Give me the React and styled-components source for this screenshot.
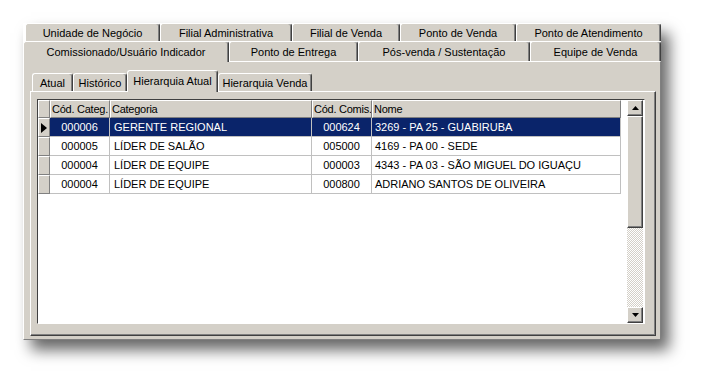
import React from 'react';
import styled, { createGlobalStyle } from 'styled-components';

const face = '#d4d0c8';
const shade = '#808080';
const dark = '#404040';

const GlobalStyle = createGlobalStyle`
  html, body {
    margin: 0;
    min-height: 100vh;
    background: #fff;
  }
  body {
    font-family: "Liberation Sans", Arial, sans-serif;
    font-size: 11px;
    color: #000;
  }
  #root {
    min-height: 100vh;
  }
`;

const Stage = styled.div`
  min-height: 100vh;
  box-sizing: border-box;
  padding: 23px 0 0 23px;
`;

const PageControl = styled.div`
  width: 638px;
  box-shadow: 8px 10px 14px rgba(0, 0, 0, 0.6);
`;

const TabRow = styled.div`
  display: flex;
  align-items: flex-end;
  height: ${p => p.$h}px;
  padding-left: ${p => p.$indent || 0}px;
  position: relative;
  z-index: 2;
`;

const Tab = styled.div`
  box-sizing: border-box;
  flex: none;
  width: ${p => p.$w}px;
  height: ${p => (p.$active ? p.$h + 1 : p.$h)}px;
  margin-bottom: ${p => (p.$active ? -1 : 0)}px;
  background: ${face};
  border-top: 1px solid #fff;
  border-left: 1px solid #fff;
  border-right: 1px solid ${dark};
  box-shadow: inset -1px 0 ${shade};
  border-radius: 3px 3px 0 0;
  display: flex;
  align-items: center;
  justify-content: center;
  padding-bottom: ${p => (p.$active ? 1 : 0)}px;
  white-space: nowrap;
`;

const OuterPanel = styled.div`
  box-sizing: border-box;
  position: relative;
  z-index: 1;
  height: 279px;
  background: ${face};
  border-top: 1px solid #fff;
  border-left: 1px solid #fff;
  border-right: 1px solid ${shade};
  border-bottom: 1px solid ${shade};
  padding: 8px 4px 3px 6px;
`;

const InnerPanel = styled.div`
  box-sizing: border-box;
  position: relative;
  z-index: 1;
  height: 245px;
  background: ${face};
  border-top: 1px solid #fff;
  border-left: 1px solid #fff;
  border-right: 1px solid ${dark};
  border-bottom: 1px solid ${dark};
  box-shadow: inset -1px -1px ${shade};
  padding: 7px 10px 0 6px;
`;

const Grid = styled.div`
  box-sizing: border-box;
  width: 608px;
  height: 225px;
  display: flex;
  background: #fff;
  border-top: 1px solid ${dark};
  border-left: 1px solid ${dark};
  border-right: 1px solid #fff;
  border-bottom: 1px solid #fff;
`;

const Table = styled.div`
  flex: 1;
  align-self: flex-start;
  display: grid;
  grid-template-columns: 12px 60px 202px 60px 249px;
  grid-auto-rows: 19px;
  grid-template-rows: 18px;
`;

const HeadCell = styled.div`
  box-sizing: border-box;
  background: ${face};
  border-top: 1px solid #fff;
  border-left: 1px solid #fff;
  border-right: 1px solid ${shade};
  border-bottom: 1px solid ${shade};
  display: flex;
  align-items: center;
  padding-left: 1px;
  letter-spacing: -0.25px;
  white-space: nowrap;
  overflow: hidden;
`;

const Indicator = styled.div`
  box-sizing: border-box;
  background: ${face};
  border-top: 1px solid #fff;
  border-left: 1px solid #fff;
  border-right: 1px solid ${shade};
  border-bottom: 1px solid ${shade};
  display: flex;
  align-items: center;
  justify-content: center;
`;

const Cell = styled.div`
  box-sizing: border-box;
  background: ${p => (p.$selected ? '#0a246a' : '#fff')};
  color: ${p => (p.$selected ? '#fff' : '#000')};
  border-right: 1px solid #c0c0c0;
  border-bottom: 1px solid #c0c0c0;
  display: flex;
  align-items: center;
  justify-content: ${p => (p.$center ? 'center' : 'flex-start')};
  padding-left: ${p => (p.$center ? 0 : p.$pad)}px;
  white-space: nowrap;
  overflow: hidden;
`;

const Scroll = styled.div`
  width: 16px;
  margin-right: 1px;
  display: flex;
  flex-direction: column;
`;

const ScrollButton = styled.div`
  box-sizing: border-box;
  height: ${p => p.$h}px;
  flex: none;
  background: ${face};
  border-top: 1px solid #fff;
  border-left: 1px solid #fff;
  border-right: 1px solid ${dark};
  border-bottom: 1px solid ${dark};
  box-shadow: inset -1px -1px ${shade};
  display: flex;
  align-items: center;
  justify-content: center;
`;

const Track = styled.div`
  flex: 1;
  background: repeating-conic-gradient(#fff 0 25%, ${face} 0 50%) 0 0 / 2px 2px;
`;

const Arrow = ({ down }) => (
  <svg width="7" height="4" viewBox="0 0 7 4">
    <polygon points={down ? '0,0 7,0 3.5,4' : '0,4 7,4 3.5,0'} fill="#000" />
  </svg>
);

const Pointer = () => (
  <svg width="6" height="10" viewBox="0 0 6 10">
    <polygon points="0,0 6,5 0,10" fill="#000" />
  </svg>
);

const backRow = [
  ['Unidade de Negócio', 135],
  ['Filial Administrativa', 132],
  ['Filial de Venda', 108],
  ['Ponto de Venda', 116],
  ['Ponto de Atendimento', 145],
];

const frontRow = [
  ['Comissionado/Usuário Indicador', 206, true],
  ['Ponto de Entrega', 129],
  ['Pós-venda / Sustentação', 172],
  ['Equipe de Venda', 131],
];

const innerTabs = [
  ['Atual', 41],
  ['Histórico', 54],
  ['Hierarquia Atual', 91, true],
  ['Hierarquia Venda', 94],
];

const columns = ['Cód. Categ.', 'Categoria', 'Cód. Comis.', 'Nome'];

const rows = [
  ['000006', 'GERENTE REGIONAL', '000624', '3269 - PA 25 - GUABIRUBA'],
  ['000005', 'LÍDER DE SALÃO', '005000', '4169 - PA 00 - SEDE'],
  ['000004', 'LÍDER DE EQUIPE', '000003', '4343 - PA 03 - SÃO MIGUEL DO IGUAÇU'],
  ['000004', 'LÍDER DE EQUIPE', '000800', 'ADRIANO SANTOS DE OLIVEIRA'],
];

export default function App() {
  return (
    <Stage>
      <GlobalStyle />
      <PageControl>
        <TabRow $h={18} $indent={2}>
          {backRow.map(([label, w]) => (
            <Tab key={label} $w={w} $h={18}>{label}</Tab>
          ))}
        </TabRow>
        <TabRow $h={20}>
          {frontRow.map(([label, w, active]) => (
            <Tab key={label} $w={w} $h={20} $active={active}>{label}</Tab>
          ))}
        </TabRow>
        <OuterPanel>
          <TabRow $h={21} $indent={2}>
            {innerTabs.map(([label, w, active]) => (
              <Tab key={label} $w={w} $h={active ? 21 : 18} $active={active}>{label}</Tab>
            ))}
          </TabRow>
          <InnerPanel>
            <Grid>
              <Table>
                <HeadCell />
                {columns.map(c => (
                  <HeadCell key={c}>{c}</HeadCell>
                ))}
                {rows.map((r, i) => {
                  const sel = i === 0;
                  return (
                    <React.Fragment key={i}>
                      <Indicator>{sel && <Pointer />}</Indicator>
                      <Cell $selected={sel} $center>{r[0]}</Cell>
                      <Cell $selected={sel} $pad={4}>{r[1]}</Cell>
                      <Cell $selected={sel} $center>{r[2]}</Cell>
                      <Cell $selected={sel} $pad={3}>{r[3]}</Cell>
                    </React.Fragment>
                  );
                })}
              </Table>
              <Scroll>
                <ScrollButton $h={16}><Arrow /></ScrollButton>
                <ScrollButton $h={112} />
                <Track />
                <ScrollButton $h={16}><Arrow down /></ScrollButton>
              </Scroll>
            </Grid>
          </InnerPanel>
        </OuterPanel>
      </PageControl>
    </Stage>
  );
}
